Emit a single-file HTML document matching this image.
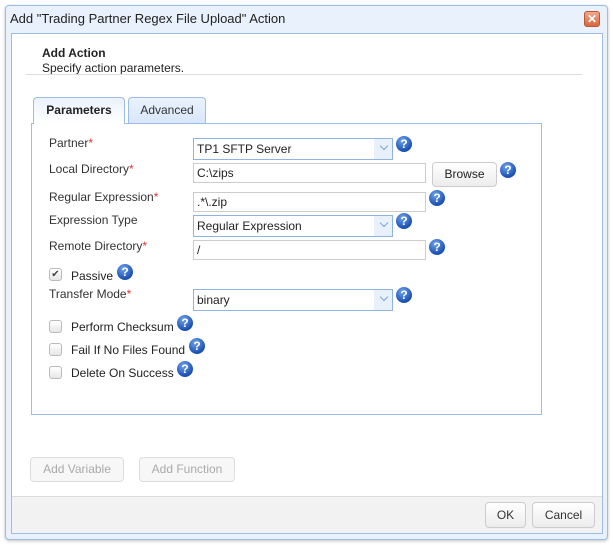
<!DOCTYPE html>
<html><head><style>
*{box-sizing:border-box}
body{margin:0;width:613px;height:545px;background:#fff;font-family:"Liberation Sans",Arial,sans-serif;font-size:12px;color:#222;position:relative;overflow:hidden}
.a{position:absolute}
.dlg{left:5px;top:5px;width:603px;height:535px;border:1px solid #9dbde6;border-radius:4px;background:#e9f1fc;box-shadow:0 1px 3px rgba(0,0,0,.25)}
.title{left:10px;top:11px;font-size:13px;color:#222}
.close{left:584px;top:11px;width:16px;height:16px;border-radius:3px;background:linear-gradient(#f0a98c,#d9663f);border:1px solid #b8583a;color:#fff;font-size:12px;line-height:14px;text-align:center;font-weight:bold}
.inner{left:11px;top:33px;width:592px;height:501px;background:#fff;border:1px solid #9dbde6}
.foot{left:12px;top:496px;width:590px;height:37px;background:#f2f2f2;border-top:1px solid #ddd}
.lbl{left:49px;font-size:12px;color:#333}
.req{color:#d33}
.inp{left:193px;height:20px;border:1px solid #ccc;background:#fff;padding:2px 3px;font-size:12px}
.sel{left:193px;width:200px;height:22px;border:1px solid #8fb4df;background:#fff;padding:3px 3px;font-size:12px}
.sel:after{content:"";position:absolute;right:0;top:0;width:18px;height:20px;background:#e8f0fb}
.sel i{position:absolute;right:5px;top:4px;width:6px;height:6px;border-right:1.5px solid #7aa5d6;border-bottom:1.5px solid #7aa5d6;transform:rotate(45deg);z-index:1}
.q{width:16px;height:16px;border-radius:50%;background:radial-gradient(circle at 40% 30%,#6fa3ea,#1a4fb3 70%);color:#fff;font-weight:bold;font-size:12px;line-height:16px;text-align:center}
.cb{left:49px;width:13px;height:13px;border:1px solid #bbb;border-radius:3px;background:linear-gradient(#fff,#e6e6e6);font-size:10px;line-height:11px;text-align:center;color:#444}
.btn{border:1px solid #ccc;border-radius:4px;background:linear-gradient(#fff,#ececec);text-align:center;font-size:12px}
</style></head><body>
<div class="a dlg"></div>
<div class="a title">Add "Trading Partner Regex File Upload" Action</div>
<div class="a close">✕</div>
<div class="a inner"></div>
<div class="a foot"></div>
<div class="a" style="left:42px;top:46px;font-weight:bold;font-size:12px">Add Action</div>
<div class="a" style="left:42px;top:61px">Specify action parameters.</div>
<div class="a" style="left:26px;top:74px;width:556px;height:1px;background:#ddd"></div>
<div class="a" style="left:31px;top:123px;width:511px;height:292px;border:1px solid #9dbde6"></div>
<div class="a" style="left:33px;top:97px;width:92px;height:27px;border:1px solid #9dbde6;border-bottom:none;border-radius:4px 4px 0 0;background:linear-gradient(#eaf2fd,#fff);text-align:center;line-height:25px;font-size:12px;font-weight:bold;color:#222">Parameters</div>
<div class="a" style="left:128px;top:97px;width:78px;height:26px;border:1px solid #9dbde6;border-bottom:none;border-radius:4px 4px 0 0;background:linear-gradient(#eaf2fd,#d9e7fa);text-align:center;line-height:25px;font-size:12px;color:#333">Advanced</div>

<div class="a lbl" style="top:136px">Partner<span class="req">*</span></div>
<div class="a sel" style="top:138px">TP1 SFTP Server<i></i></div>
<div class="a q" style="left:396px;top:136px">?</div>

<div class="a lbl" style="top:162px">Local Directory<span class="req">*</span></div>
<div class="a inp" style="top:163px;width:233px">C:\zips</div>
<div class="a btn" style="left:432px;top:162px;width:65px;height:25px;line-height:23px">Browse</div>
<div class="a q" style="left:500px;top:162px">?</div>

<div class="a lbl" style="top:190px">Regular Expression<span class="req">*</span></div>
<div class="a inp" style="top:192px;width:233px">.*\.zip</div>
<div class="a q" style="left:429px;top:190px">?</div>

<div class="a lbl" style="top:213px">Expression Type</div>
<div class="a sel" style="top:215px">Regular Expression<i></i></div>
<div class="a q" style="left:396px;top:213px">?</div>

<div class="a lbl" style="top:239px">Remote Directory<span class="req">*</span></div>
<div class="a inp" style="top:240px;width:233px">/</div>
<div class="a q" style="left:429px;top:239px">?</div>

<div class="a cb" style="top:268px">✔</div>
<div class="a" style="left:71px;top:269px">Passive</div>
<div class="a q" style="left:117px;top:264px">?</div>

<div class="a lbl" style="top:287px">Transfer Mode<span class="req">*</span></div>
<div class="a sel" style="top:289px">binary<i></i></div>
<div class="a q" style="left:396px;top:287px">?</div>

<div class="a cb" style="top:320px"></div>
<div class="a" style="left:71px;top:320px">Perform Checksum</div>
<div class="a q" style="left:177px;top:315px">?</div>
<div class="a cb" style="top:343px"></div>
<div class="a" style="left:71px;top:343px">Fail If No Files Found</div>
<div class="a q" style="left:189px;top:338px">?</div>
<div class="a cb" style="top:366px"></div>
<div class="a" style="left:71px;top:366px">Delete On Success</div>
<div class="a q" style="left:177px;top:361px">?</div>

<div class="a btn" style="left:30px;top:457px;width:94px;height:25px;line-height:23px;color:#aaa;background:#f7f7f7;border-color:#ddd">Add Variable</div>
<div class="a btn" style="left:139px;top:457px;width:96px;height:25px;line-height:23px;color:#aaa;background:#f7f7f7;border-color:#ddd">Add Function</div>
<div class="a btn" style="left:485px;top:502px;width:41px;height:26px;line-height:24px;color:#333">OK</div>
<div class="a btn" style="left:532px;top:502px;width:63px;height:26px;line-height:24px;color:#333">Cancel</div>
</body></html>
